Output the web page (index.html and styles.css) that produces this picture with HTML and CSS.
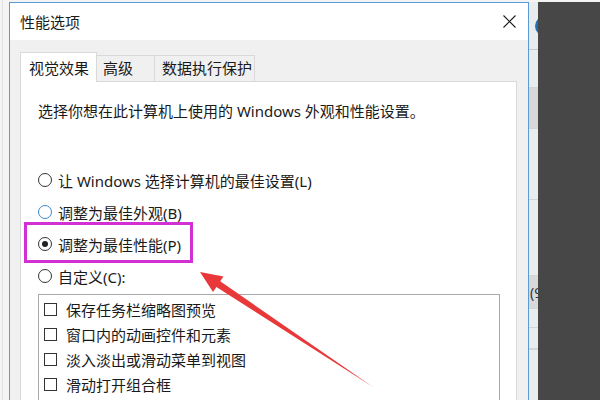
FILE: index.html
```html
<!DOCTYPE html>
<html lang="zh-CN">
<head>
    <meta charset="UTF-8">
    <title>性能选项</title>
    <link rel="stylesheet" href="styles.css">
</head>
<body>
    <div class="screen">
        <div class="backdrop"></div>

        <div class="dialog">
            <div class="titlebar">
                <span class="title">性能选项</span>
                <svg class="close" width="13" height="13" viewBox="0 0 13 13">
                    <path d="M0.5 0.5 L12.5 12.5 M12.5 0.5 L0.5 12.5" stroke="#1a1a1a" stroke-width="1.1" fill="none"/>
                </svg>
            </div>

            <div class="dialog-body">
                <div class="tabs">
                    <div class="tab tab-active">视觉效果</div>
                    <div class="tab tab-adv">高级</div>
                    <div class="tab tab-dep">数据执行保护</div>
                </div>

                <div class="page">
                    <p class="intro">选择你想在此计算机上使用的 Windows 外观和性能设置。</p>

                    <div class="options">
                        <div class="option"><span class="radio"></span>让 Windows 选择计算机的最佳设置(L)</div>
                        <div class="option"><span class="radio radio-hover"></span>调整为最佳外观(B)</div>
                        <div class="option"><span class="radio radio-on"></span>调整为最佳性能(P)</div>
                        <div class="option"><span class="radio"></span>自定义(C):</div>
                    </div>

                    <div class="listbox">
                        <div class="item"><span class="check"></span>保存任务栏缩略图预览</div>
                        <div class="item"><span class="check"></span>窗口内的动画控件和元素</div>
                        <div class="item"><span class="check"></span>淡入淡出或滑动菜单到视图</div>
                        <div class="item"><span class="check"></span>滑动打开组合框</div>
                        <div class="item"><span class="check"></span>平滑滚动列表框</div>
                    </div>
                </div>
            </div>
        </div>

        <!-- window behind the dialog, only a sliver shows -->
        <div class="side-strip">
            <div class="strip-top"><span class="strip-icon"></span></div>
            <div class="strip-cell strip-a"></div>
            <div class="strip-cell strip-band strip-b"></div>
            <div class="strip-cell strip-c"></div>
            <div class="strip-cell strip-d"></div>
            <div class="strip-cell strip-band strip-e"><span class="strip-text">(9</span></div>
            <div class="strip-cell strip-f"></div>
            <div class="strip-cell strip-g"></div>
            <div class="strip-cell"></div>
        </div>

        <div class="dark"></div>

        <!-- annotation drawn over the screenshot -->
        <svg class="annot" width="600" height="400" viewBox="0 0 600 400">
            <rect x="25.5" y="223.5" width="166" height="38" fill="none" stroke="#d22fd4" stroke-width="3"/>
            <polygon points="200,272 213,292 216.4,287.1 373,387 220.2,281.3 223.5,276.5" fill="#e8383a"/>
        </svg>
    </div>
</body>
</html>
```

FILE: styles.css
```css
/* Page */
body {
    margin: 0;
    font-family: "Noto Sans", "Noto Sans CJK SC", sans-serif;
    font-size: 15px;
    color: #1a1a1a;
}

.screen {
    position: relative;
    display: flex;
    width: 600px;
    height: 400px;
    overflow: hidden;
    background: #f3f3f3;
}

.backdrop {
    width: 9px;
    flex-shrink: 0;
    background: #f4f4f4;
    border-left: 2px solid #f4f4f4;
    box-sizing: border-box;
    box-shadow: inset 1px 0 0 #e2e2e2;
}

/* Dialog window */
.dialog {
    width: 520px;
    flex-shrink: 0;
    margin-top: 2px;
    box-sizing: border-box;
    border: 1px solid #5b9bd5;
    border-bottom: none;
    background: #f0f0f0;
    display: flex;
    flex-direction: column;
}

.titlebar {
    height: 37px;
    flex-shrink: 0;
    background: #ffffff;
    display: flex;
    align-items: center;
    justify-content: space-between;
    padding: 0 12px 0 10px;
}

.title {
    line-height: 20px;
}

.dialog-body {
    flex: 1;
    padding: 12px 11px 0 10px;
    display: flex;
    flex-direction: column;
}

/* Tabs */
.tabs {
    display: flex;
    align-items: flex-end;
    height: 29px;
    flex-shrink: 0;
}

.tab {
    box-sizing: border-box;
    height: 26px;
    line-height: 25px;
    border: 1px solid #d9d9d9;
    border-bottom: none;
    border-left: none;
    background: #f0f0f0;
    white-space: nowrap;
}

.tab-active {
    position: relative;
    z-index: 1;
    height: 30px;
    line-height: 30px;
    width: 77px;
    padding-left: 8px;
    margin-bottom: -1px;
    border-left: 1px solid #d9d9d9;
    background: #ffffff;
}

.tab-adv {
    width: 58px;
    padding-left: 6px;
}

.tab-dep {
    width: 100px;
    padding-left: 7px;
}

/* Tab page */
.page {
    flex: 1;
    background: #ffffff;
    border: 1px solid #d9d9d9;
    border-bottom: none;
    padding: 19px 17px 0 17px;
}

.intro {
    margin: 0;
    line-height: 20px;
}

.options {
    display: flex;
    flex-direction: column;
    gap: 12px;
    margin-top: 49px;
}

.option {
    display: flex;
    align-items: center;
    height: 20px;
    gap: 6px;
    white-space: nowrap;
}

.radio {
    width: 14px;
    height: 14px;
    box-sizing: border-box;
    border: 1px solid #333333;
    border-radius: 50%;
    background: #ffffff;
    display: flex;
    align-items: center;
    justify-content: center;
}

.radio-hover {
    border-color: #3f86c8;
}

.radio-on::after {
    content: "";
    width: 6px;
    height: 6px;
    border-radius: 50%;
    background: #222222;
}

/* List of effects */
.listbox {
    width: 462px;
    box-sizing: border-box;
    margin-top: 8px;
    height: 140px;
    border: 1px solid #a8a8a8;
    padding: 2px 5px 0 5px;
}

.item {
    display: flex;
    align-items: center;
    height: 25px;
    gap: 9px;
    white-space: nowrap;
}

.check {
    width: 13px;
    height: 13px;
    box-sizing: border-box;
    border: 1px solid #333333;
    background: #ffffff;
}

/* Sliver of the window behind */
.side-strip {
    width: 9px;
    flex-shrink: 0;
    margin-top: 2px;
    background: #e9ecef;
    display: flex;
    flex-direction: column;
    overflow: hidden;
}

.strip-top {
    height: 47px;
    flex-shrink: 0;
    border-bottom: 1px solid #c9c9c9;
    display: flex;
    align-items: center;
}

.strip-icon {
    width: 20px;
    height: 20px;
    margin-left: 6px;
    flex-shrink: 0;
    border-radius: 50%;
    background: #1f6fb8;
}

.strip-cell {
    flex-shrink: 0;
    border-bottom: 1px solid #d4d4d4;
}

.strip-band {
    background: #d8d8d8;
}

.strip-a { height: 37px; }
.strip-b { height: 40px; }
.strip-c { height: 70px; }
.strip-d { height: 75px; }

.strip-e {
    height: 32px;
    display: flex;
    align-items: center;
}

.strip-f { height: 18px; }
.strip-g { height: 20px; }

.strip-text {
    font-size: 14px;
    color: #333333;
    white-space: nowrap;
    margin-left: 1px;
}

.dark {
    flex: 1;
    margin-top: 2px;
    background: #474747;
}

/* Annotation overlay */
.annot {
    position: absolute;
    top: 0;
    left: 0;
    pointer-events: none;
}
```
